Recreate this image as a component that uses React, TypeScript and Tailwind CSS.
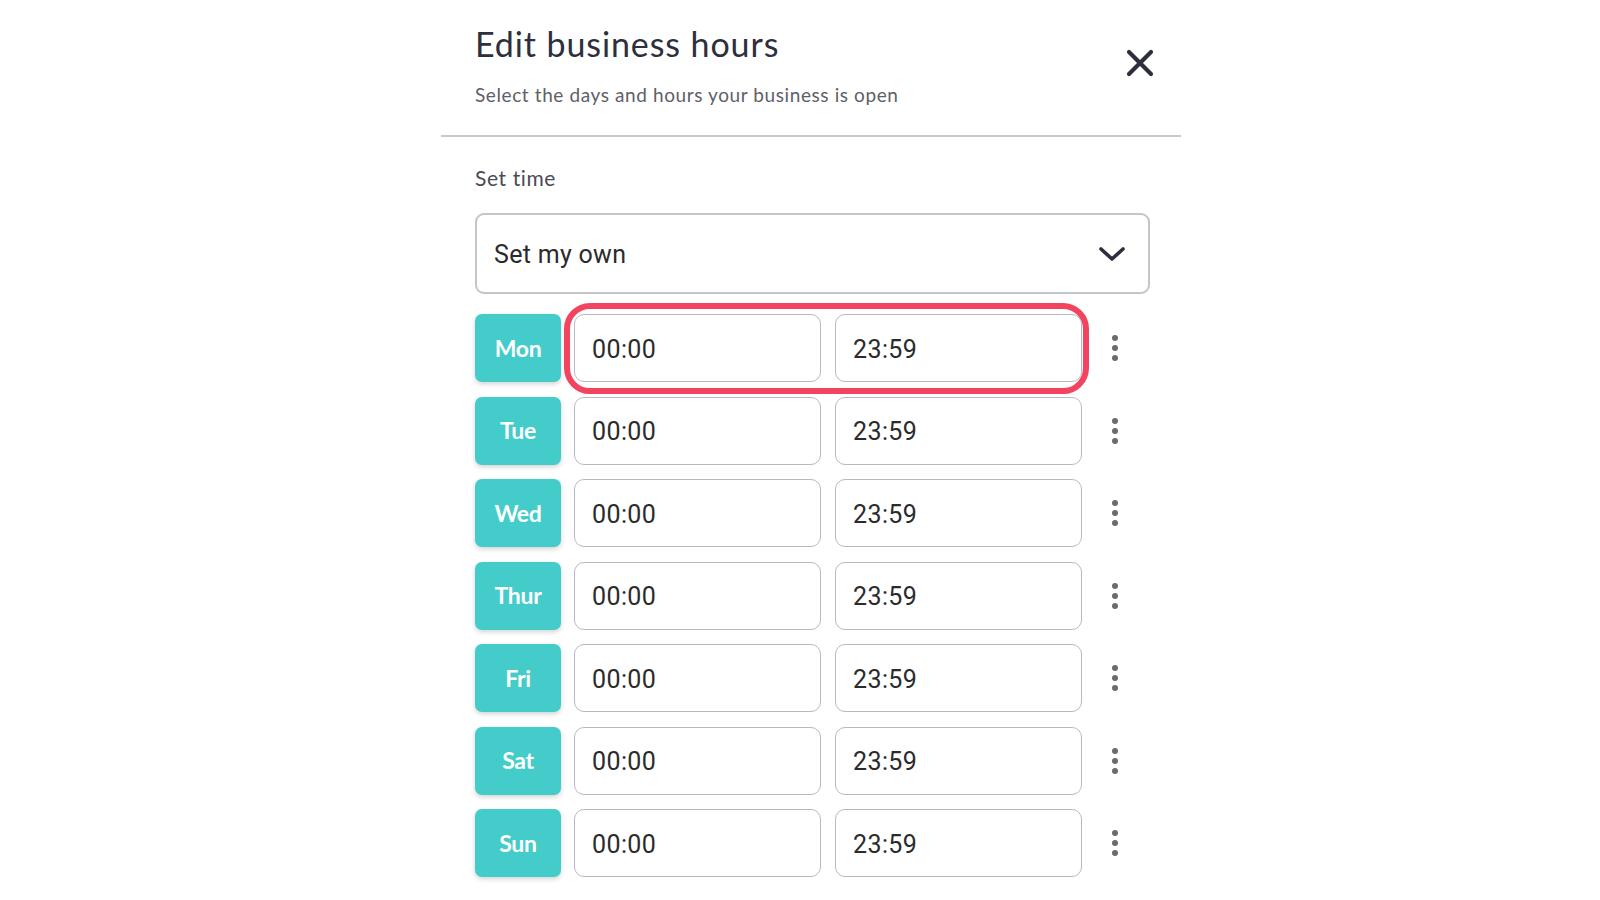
import React from "react";

const days = ["Mon", "Tue", "Wed", "Thur", "Fri", "Sat", "Sun"];

const heading = { fontFamily: "Lato, 'Noto Sans', sans-serif" };
const field = { fontFamily: "Roboto, 'Liberation Sans', sans-serif" };

const DayRow: React.FC<{ day: string; highlight?: boolean }> = ({ day, highlight }) => (
  <div className="relative flex items-center h-[68px]">
    <div
      className="w-[86px] h-[68px] rounded-[7px] bg-[#44cccb] shadow-[0_2px_5px_rgba(0,0,0,0.18)] flex items-center justify-center text-white text-[23px] font-bold tracking-[-0.3px]"
      style={heading}
    >
      {day}
    </div>
    <div
      className="ml-[13px] w-[247px] h-[68px] rounded-[10px] border border-[#b9b9c0] flex items-center pl-[17px] pt-[3px] text-[25px] tracking-[0.4px] text-[#2b2b2b]"
      style={field}
    >
      00:00
    </div>
    <div
      className="ml-[14px] w-[247px] h-[68px] rounded-[10px] border border-[#b9b9c0] flex items-center pl-[17px] pt-[3px] text-[25px] tracking-[0.4px] text-[#2b2b2b]"
      style={field}
    >
      23:59
    </div>
    <div className="ml-[30px] flex flex-col gap-[4px]">
      <span className="w-[6px] h-[6px] rounded-full bg-[#6b6b6f]" />
      <span className="w-[6px] h-[6px] rounded-full bg-[#6b6b6f]" />
      <span className="w-[6px] h-[6px] rounded-full bg-[#6b6b6f]" />
    </div>
    {highlight && (
      <div className="absolute left-[89px] top-[-11px] w-[525px] h-[91px] rounded-[26px] border-[6px] border-[#f2435f] pointer-events-none" />
    )}
  </div>
);

export default function App() {
  return (
    <div className="min-h-[900px] bg-white">
      <div className="w-[740px] ml-[441px]">
        <div className="flex justify-between items-start px-[34px] pt-[23px] pb-[28px] border-b-2 border-[#c8c8cc]">
          <div>
            <h1 className="text-[34px] leading-[42px] tracking-[0.9px] text-[#2d2f3d]" style={heading}>
              Edit business hours
            </h1>
            <p className="mt-[18px] text-[19px] leading-[24px] tracking-[0.6px] text-[#5e6068]" style={heading}>
              Select the days and hours your business is open
            </p>
          </div>
          <svg
            className="mt-[26px] mr-[-7px]"
            width="28"
            height="28"
            viewBox="0 0 28 28"
            fill="none"
            stroke="#2d2f3d"
            strokeWidth="4.2"
            strokeLinecap="round"
          >
            <path d="M3 3L25 25M25 3L3 25" />
          </svg>
        </div>

        <div className="px-[34px] pt-[27px]">
          <div className="text-[21px] leading-[28px] tracking-[0.6px] text-[#4a4b55]" style={heading}>
            Set time
          </div>
          <div
            className="mt-[21px] w-[675px] h-[81px] rounded-[9px] border-2 border-[#c4c4ca] flex items-center justify-between pl-[17px] pr-[22px] text-[25px] tracking-[0.3px] text-[#2b2b2b]"
            style={field}
          >
            <span className="pt-[2px]">Set my own</span>
            <svg
              width="28"
              height="16"
              viewBox="0 0 28 16"
              fill="none"
              stroke="#2d2f3d"
              strokeWidth="3.6"
              strokeLinecap="round"
              strokeLinejoin="round"
            >
              <path d="M3 3L14 13L25 3" />
            </svg>
          </div>

          <div className="mt-[20px] flex flex-col gap-[14.5px]">
            {days.map((d, i) => (
              <DayRow key={d} day={d} highlight={i === 0} />
            ))}
          </div>
        </div>
      </div>
    </div>
  );
}
